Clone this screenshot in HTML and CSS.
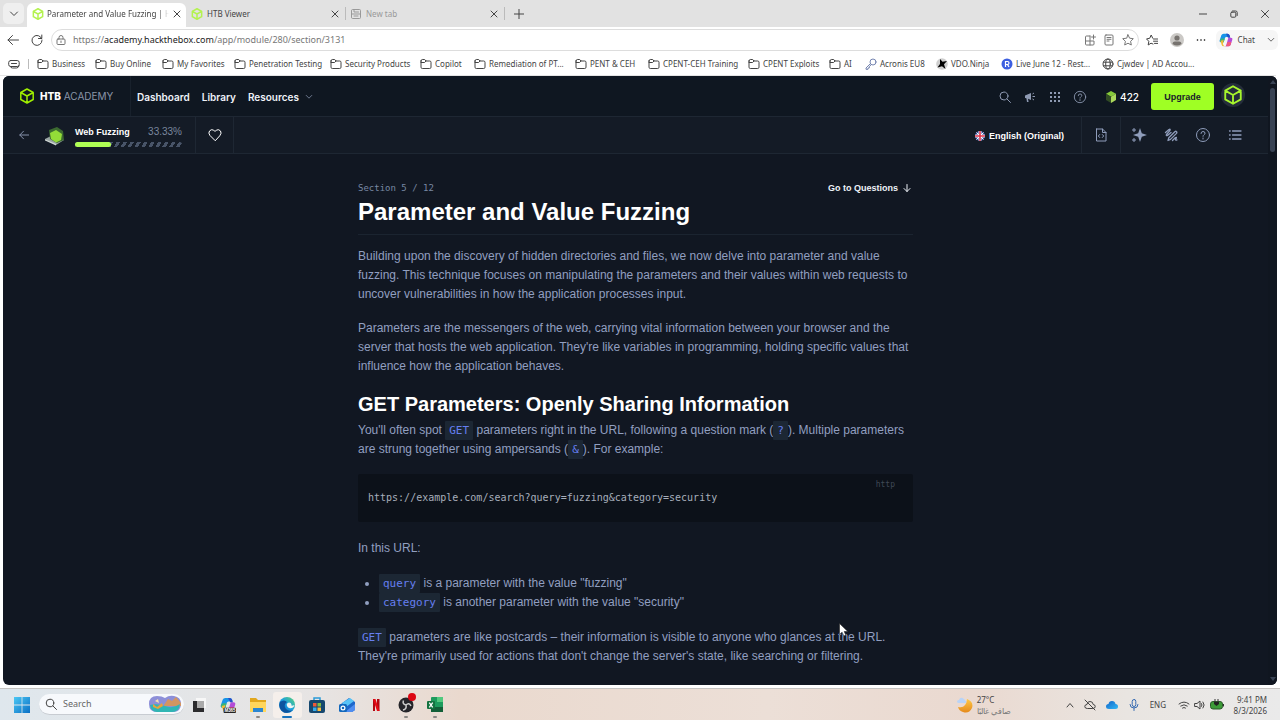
FILE: index.html
```html
<!DOCTYPE html>
<html lang="en">
<head>
<meta charset="utf-8">
<title>Parameter and Value Fuzzing | Hack The Box Academy</title>
<link rel="stylesheet" href="styles.css">
</head>
<body>
<svg class="defs" aria-hidden="true">
  <defs>
    <linearGradient id="g-edge" x1="0" y1="1" x2="1" y2="0"><stop offset="0" stop-color="#0c59a4"/><stop offset=".5" stop-color="#1b9de2"/><stop offset="1" stop-color="#5bd66f"/></linearGradient>
    <linearGradient id="g-win" x1="0" y1="0" x2="1" y2="1"><stop offset="0" stop-color="#4cc8f4"/><stop offset="1" stop-color="#0a6fc4"/></linearGradient>
    <linearGradient id="g-cloud" x1="0" y1="0" x2="1" y2="1"><stop offset="0" stop-color="#1264c8"/><stop offset="1" stop-color="#32b8f5"/></linearGradient>
    <linearGradient id="g-moon" x1="0" y1="0" x2="0" y2="1"><stop offset="0" stop-color="#ffc845"/><stop offset="1" stop-color="#e58a1c"/></linearGradient>
    <symbol id="i-folder" viewBox="0 0 12 12"><path d="M1 3v6.2q0 1.3 1.3 1.3h7.4q1.3 0 1.3-1.3V4.3Q11 3 9.700 3H6L4.700 1.500H2.300Q1 1.500 1 3zM1 4.500h3.600L6 3"/></symbol>
    <symbol id="i-cube" viewBox="0 0 16 16"><path d="M8 1l6.200 3.500v7L8 15l-6.200-3.500v-7zM1.800 4.500L8 8l6.200-3.500M8 8v7"/></symbol>
    <symbol id="i-close" viewBox="0 0 8 8"><path d="M1 1l6 6M7 1L1 7"/></symbol>
    <symbol id="i-help" viewBox="0 0 16 16"><circle cx="8" cy="8" r="6.500"/><path d="M6 6.500q0-2 2-2t2 1.700q0 1-1 1.600-1 .6-1 1.500M8 11v1"/></symbol>
    <symbol id="i-down" viewBox="0 0 10 10"><path d="M1.500 3L5 6.500 8.500 3"/></symbol>
    <symbol id="i-copilot" viewBox="0 0 18 18"><path fill="#1794e8" d="M6 1h5q2 0 2.600 2l.6 2H9.500q-1.500 0-2 1.700L6 12H3Q0 12 1 9l2-6q.7-2 3-2z"/><path fill="#39b57a" d="M3 12h3l1.500-5H3L1.200 9Q.5 12 3 12z"/><path fill="#f2ba37" d="M2 10l4-1-1 5q1 3 3 3H6q-2 0-2.600-2L2.500 12z"/><path fill="#b44bd8" d="M12 6h3q3 0 2 3l-2 6q-.7 2-3 2H7q2 0 2.500-2z"/><path fill="#f0577c" d="M8 17q1.200 0 1.800-2l1-3.500h5L15 15q-.7 2-3 2z"/><path fill="#2750c8" d="M9 1h2q2 0 2.600 2l.9 3h-3z"/></symbol>
  </defs>
</svg>

<header class="browser">
  <div class="tabstrip">
    <button class="tab-menu" aria-label="Tab actions"><svg class="ic s10"><use href="#i-down"/></svg></button>
    <div class="tab tab-active"><svg class="ic s12 lime"><use href="#i-cube"/></svg><span class="tab-title fade">Parameter and Value Fuzzing | Hac</span><button class="tab-x" aria-label="Close tab"><svg class="ic s8"><use href="#i-close"/></svg></button></div>
    <div class="tab"><svg class="ic s12 lime"><use href="#i-cube"/></svg><span class="tab-title">HTB Viewer</span><button class="tab-x" aria-label="Close tab"><svg class="ic s8"><use href="#i-close"/></svg></button></div>
    <div class="tab tab-new"><svg class="ic s12" viewBox="0 0 12 12"><path d="M1.500 2.500q0-1 1-1h7q1 0 1 1v7q0 1-1 1h-7q-1 0-1-1zM1.500 6h9M4 1.500V4h4.500M4 8h4"/></svg><span class="tab-title">New tab</span><button class="tab-x" aria-label="Close tab"><svg class="ic s8"><use href="#i-close"/></svg></button></div>
    <button class="tab-add" aria-label="New tab"><svg class="ic s10" viewBox="0 0 10 10"><path d="M5 0v10M0 5h10"/></svg></button>
    <div class="window-buttons">
      <button aria-label="Minimize"><svg class="ic s8" viewBox="0 0 8 8"><path d="M0 4h8"/></svg></button>
      <button aria-label="Restore"><svg class="ic s8" viewBox="0 0 8 8"><rect x=".8" y="2.200" width="5" height="5" rx="1"/><path d="M2.500 1h3.200Q7.200 1 7.200 2.500v3"/></svg></button>
      <button aria-label="Close"><svg class="ic s8" viewBox="0 0 8 8"><path d="M.5.5l7 7M7.500.5l-7 7"/></svg></button>
    </div>
  </div>

  <div class="toolbar">
    <button aria-label="Back"><svg class="ic s12" viewBox="0 0 12 12"><path d="M11.500 6H1M5.500 1.500L1 6l4.500 4.500"/></svg></button>
    <button aria-label="Refresh"><svg class="ic s12" viewBox="0 0 12 12"><path d="M10.800 5A5 5 0 1 0 11 6.500M10.800 1v3.500H7.500"/></svg></button>
    <div class="address">
      <svg class="ic s10" viewBox="0 0 10 10"><rect x="1" y="4" width="8" height="5.500" rx="1"/><path d="M3 4V2.500a2 2 0 0 1 4 0V4M5 6v1.500"/></svg>
      <a class="url" href="#">https://<b>academy.hackthebox.com</b>/app/module/280/section/3131</a>
      <svg class="ic s12" viewBox="0 0 12 12"><path d="M6 2H2.500Q1.500 2 1.500 3v7q0 1 1 1H9q1 0 1-1V7H1.500M6 2v9M9.500 1v4M7.500 3h4"/></svg>
      <svg class="ic s12" viewBox="0 0 12 12"><rect x="2" y="1" width="8" height="10" rx="1"/><path d="M4 3.500h4M4 5.300h4M4 7h2"/></svg>
      <svg class="ic s12" viewBox="0 0 12 12"><path d="M6 .8l1.600 3.400 3.700.5-2.700 2.600.7 3.700L6 9.200 2.700 11l.7-3.700L.7 4.700l3.700-.5z"/></svg>
    </div>
    <button aria-label="Favorites"><svg class="ic s12" viewBox="0 0 12 12"><path d="M7 10L5 9.200 2.200 11l.6-3.700L.5 4.900l3.200-.6L5.200 1l1.500 3.200M7.500 5H12M7.500 7.200H12M8.500 9.400H12"/></svg></button>
    <button class="profile" aria-label="Profile"><svg class="s14" viewBox="0 0 14 14"><circle cx="7" cy="7" r="7" fill="#cbc9c6"/><circle cx="7" cy="5" r="2.600" fill="#77736f"/><path d="M2.500 11Q2.500 8.500 5 8.500h4q2.500 0 2.500 2.500Q7 14 2.500 11z" fill="#77736f"/></svg></button>
    <button aria-label="Settings and more"><svg class="s10" viewBox="0 0 10 10"><circle cx="1.500" cy="5" r=".8"/><circle cx="5" cy="5" r=".8"/><circle cx="8.500" cy="5" r=".8"/></svg></button>
    <button class="chat"><svg class="s14"><use href="#i-copilot"/></svg><span>Chat</span><svg class="ic s8"><use href="#i-down"/></svg></button>
  </div>

  <nav class="bookmarks" aria-label="Favorites bar">
    <a href="#" aria-label="Workspace"><svg class="ic s12" viewBox="0 0 12 12"><rect x=".7" y="2.500" width="10.500" height="6" rx="2"/><path d="M3.500 5.500h5M2.500 8.500q0 1.500 2 1.500h4q1.800 0 2.500-2"/></svg></a>
    <a href="#"><svg class="ic s12"><use href="#i-folder"/></svg>Business</a>
    <a href="#"><svg class="ic s12"><use href="#i-folder"/></svg>Buy Online</a>
    <a href="#"><svg class="ic s12"><use href="#i-folder"/></svg>My Favorites</a>
    <a href="#"><svg class="ic s12"><use href="#i-folder"/></svg>Penetration Testing</a>
    <a href="#"><svg class="ic s12"><use href="#i-folder"/></svg>Security Products</a>
    <a href="#"><svg class="ic s12"><use href="#i-folder"/></svg>Copilot</a>
    <a href="#"><svg class="ic s12"><use href="#i-folder"/></svg>Remediation of PT...</a>
    <a href="#"><svg class="ic s12"><use href="#i-folder"/></svg>PENT &amp; CEH</a>
    <a href="#"><svg class="ic s12"><use href="#i-folder"/></svg>CPENT-CEH Training</a>
    <a href="#"><svg class="ic s12"><use href="#i-folder"/></svg>CPENT Exploits</a>
    <a href="#"><svg class="ic s12"><use href="#i-folder"/></svg>AI</a>
    <a href="#"><svg class="ic s12 key" viewBox="0 0 12 12"><circle cx="8" cy="4" r="3"/><path d="M5.500 5.500L1 10v1.300h2V10h1.300V8.500L6.500 6.500"/></svg>Acronis EU8</a>
    <a href="#"><svg class="s12" viewBox="0 0 12 12"><circle cx="6" cy="6" r="5.800" fill="#cfcfcf"/><path d="M4 1l2.500 2.700L11 3 8 6.200 9.500 11 6 8.200 1.500 9.500 4 6z"/></svg>VDO.Ninja</a>
    <a href="#"><svg class="s12" viewBox="0 0 12 12"><circle cx="6" cy="6" r="5.500" fill="#3d5fe0"/><path d="M4.500 9V3.500h2q1.500 0 1.500 1.500T6.500 6.500h-2M6.500 6.500L8 9" fill="none" stroke="#fff" stroke-width="1.200"/></svg>Live June 12 - Rest...</a>
    <a href="#"><svg class="ic s12" viewBox="0 0 12 12"><circle cx="6" cy="6" r="5"/><ellipse cx="6" cy="6" rx="2.300" ry="5"/><path d="M1.500 4.200h9M1.500 7.800h9"/></svg>Cjwdev | AD Accou...</a>
  </nav>
</header>

<div class="viewport">
  <div class="page">
    <header class="site-header">
      <a class="brand" href="#"><svg class="ic s16 logo-cube"><use href="#i-cube"/></svg><span><b>HTB</b> ACADEMY</span></a>
      <nav class="site-nav">
        <a href="#">Dashboard</a><a href="#">Library</a><a href="#">Resources<svg class="ic s8"><use href="#i-down"/></svg></a>
      </nav>
      <div class="header-tools">
        <button aria-label="Search"><svg class="ic s12" viewBox="0 0 12 12"><circle cx="5" cy="5" r="4"/><path d="M8 8l3.500 3.500"/></svg></button>
        <button aria-label="Announcements"><svg class="s12" viewBox="0 0 12 12"><path fill="currentColor" d="M1 4.500L7 2v7L4 7.800 4.600 11H3L2.400 7.200 1 7z"/><path stroke="currentColor" d="M8.500 5.500H11M8.500 3l1.500-1M8.500 8l1.500 1"/></svg></button>
        <button aria-label="Apps"><svg class="s12" viewBox="0 0 12 12"><path stroke="currentColor" stroke-width="2" stroke-dasharray="2 2" d="M1 2h10M1 6h10M1 10h10"/></svg></button>
        <button aria-label="Help"><svg class="ic s14"><use href="#i-help"/></svg></button>
      </div>
      <span class="cubes"><svg class="s12" viewBox="0 0 12 12"><path fill="#86c93a" d="M6 0l5 2.800L6 5.800 1 2.800z"/><path fill="#314c24" d="M1 2.800l5 3V12L1 9z"/><path fill="#abd85c" d="M11 2.800l-5 3V12l5-3z"/></svg>422</span>
      <button class="upgrade">Upgrade</button>
      <button class="avatar" aria-label="Account"><svg class="ic s20"><use href="#i-cube"/></svg></button>
    </header>

    <div class="module-bar">
      <a class="back" href="#" aria-label="Back to module"><svg class="ic s10" viewBox="0 0 10 10"><path d="M10 5H.8M4.500 1.200L.8 5l3.700 3.800"/></svg></a>
      <div class="module">
        <svg class="s20" viewBox="0 0 20 20"><path fill="#9aa6a3" d="M0 13l8-4 11 5-8 5z"/><path fill="#d0d8d5" d="M0 13l11 5v1.500L0 14.500z"/><path fill="#3c6a30" d="M4 4l8-3 6 4 1 9-7 3-7-4z"/><path fill="#93dc38" d="M5 7l6-3 6 4-1 6-5 2.500L6 13z"/></svg>
        <div class="module-progress">
          <div class="module-label"><b>Web Fuzzing</b><span>33.33%</span></div>
          <div class="track" role="progressbar" aria-label="Web Fuzzing" aria-valuenow="33"><div class="bar" style="width:33.33%"></div></div>
        </div>
      </div>
      <button class="like" aria-label="Favorite"><svg class="ic s14" viewBox="0 0 14 14"><path d="M7 12.500L2 7.500Q0 5 1.500 3T5.500 2L7 3.500 8.500 2q2.500-1 4 1T12 7.500z"/></svg></button>
      <button class="language"><svg class="s10" viewBox="0 0 10 10"><defs><clipPath id="flag-clip"><circle cx="5" cy="5" r="5"/></clipPath></defs><g clip-path="url(#flag-clip)"><path d="M0 0h10v10H0z" fill="#334b99"/><path d="M0 0l10 10M10 0L0 10" stroke="#fff"/><path d="M5 0v10M0 5h10" stroke="#fff" stroke-width="3"/><path d="M5 0v10M0 5h10" stroke="#de344b" stroke-width="1.600"/></g></svg>English (Original)</button>
      <button class="source" aria-label="Source"><svg class="ic s14" viewBox="0 0 14 14"><path d="M3 1h5.500L12 4.500V13H2.500V1zM8.500 1v3.500H12M5.700 6.500L4.300 8l1.400 1.500M8.300 6.500L9.700 8 8.300 9.500"/></svg></button>
      <div class="section-tools">
        <button aria-label="Assistant"><svg class="s16" viewBox="0 0 16 16"><path fill="currentColor" d="M9 1l1.800 5.200L16 8l-5.200 1.800L9 15l-1.800-5.200L2 8l5.200-1.800z"/><path stroke="currentColor" d="M3 1v4M1 3h4M3 11v4M1 13h4"/></svg></button>
        <button aria-label="Notes"><svg class="ic s14" viewBox="0 0 14 14"><path stroke-width="1.300" d="M4 12.500l.8-2.800 6-6q1-.8 1.700 0t0 1.700l-6 6zM1.500 4.500L5 1.500q1.500-.8 1 .8L2.500 6.500q-.6 1.600 1 1L7 4.500M8.500 12.500l3-3q1.200-.6.8.6l-.8 1.400q0 1 1.500.5"/></svg></button>
        <button aria-label="Help"><svg class="ic s16"><use href="#i-help"/></svg></button>
        <button aria-label="Contents"><svg class="ic s14" viewBox="0 0 14 14"><path d="M4.500 3H13M4.500 7H13M4.500 11H13M1.500 3h.7M1.500 7h.7M1.500 11h.7" stroke-width="1.300"/></svg></button>
      </div>
    </div>

    <main class="article">
      <div class="article-top"><span class="section-no">Section 5 / 12</span><a class="go" href="#questions">Go to Questions<svg class="ic s8" viewBox="0 0 8 8"><path d="M4 .5v7M1 4.500l3 3 3-3"/></svg></a></div>
      <h1>Parameter and Value Fuzzing</h1>
      <p>Building upon the discovery of hidden directories and files, we now delve into parameter and value fuzzing. This technique focuses on manipulating the parameters and their values within web requests to uncover vulnerabilities in how the application processes input.</p>
      <p>Parameters are the messengers of the web, carrying vital information between your browser and the server that hosts the web application. They're like variables in programming, holding specific values that influence how the application behaves.</p>
      <h2>GET Parameters: Openly Sharing Information</h2>
      <p>You'll often spot <code>GET</code> parameters right in the URL, following a question mark (<code>?</code>). Multiple parameters are strung together using ampersands (<code>&amp;</code>). For example:</p>
      <div class="snippet"><span class="lang">http</span><pre>https://example.com/search?query=fuzzing&amp;category=security</pre></div>
      <p>In this URL:</p>
      <ul>
        <li><code>query</code> is a parameter with the value "fuzzing"</li>
        <li><code>category</code> is another parameter with the value "security"</li>
      </ul>
      <p><code>GET</code> parameters are like postcards – their information is visible to anyone who glances at the URL. They're primarily used for actions that don't change the server's state, like searching or filtering.</p>
    </main>
  </div>
  <div class="scrollbar" aria-hidden="true"><i class="arrow-up"></i><div class="thumb"></div><i class="arrow-down"></i></div>
</div>

<footer class="taskbar">
  <button class="start" aria-label="Start"><svg class="s16" viewBox="0 0 16 16"><path fill="url(#g-win)" d="M0 0h7.600v7.600H0zM8.400 0H16v7.600H8.400zM0 8.400h7.600V16H0zM8.400 8.400H16V16H8.400z"/></svg></button>
  <label class="search"><svg class="ic s12" viewBox="0 0 12 12"><circle cx="5" cy="5" r="3.800"/><path d="M8 8l3.500 3.500"/></svg><input type="text" placeholder="Search" aria-label="Search">
    <svg class="scene" viewBox="0 0 34 18"><path fill="#8d8fd8" d="M1 9Q1 1 9 1q5 0 8 2 4-3 9-2 7 1 7 8t-7 8H9Q1 17 1 9z"/><path fill="#d39562" d="M16 10l4-6 4 2 4-4 5 6v3H16z"/><path fill="#30b6b4" d="M2 10q7-2 15 1t15-2q-1 8-8 8H9q-6 0-7-7z"/><path fill="#e8a33c" d="M5 9l4 3 5-4 1 3-5 3-5-2z"/><path fill="#f7dfae" d="M7 6l3-2 1 4z"/></svg></label>
  <div class="apps">
    <button aria-label="Task view"><svg class="s16" viewBox="0 0 16 16"><path fill="#f7f7f7" d="M5 1h10v10H5z"/><path fill="#2b2b2d" d="M2 4h4v7h7v4H2z"/><path fill="#aaa" d="M6 4h7v7H6z"/></svg></button>
    <button aria-label="Microsoft 365 Copilot"><svg class="s16" viewBox="0 0 18 18"><use href="#i-copilot"/><rect x="4" y="12" width="14" height="6" rx="1" fill="#222"/><text x="5" y="17" class="badge-text">M365</text></svg></button>
    <button class="open" aria-label="File Explorer"><svg class="s16" viewBox="0 0 16 16"><path fill="#e2a71d" d="M0 1h6l2 2h8v12H0z"/><path fill="#ffd65c" d="M0 5h16v10H0z"/><path fill="#2b86d1" d="M3 11h10v4H3z"/></svg></button>
    <button class="current" aria-label="Microsoft Edge"><svg class="s16" viewBox="0 0 16 16"><circle cx="8" cy="8" r="8" fill="url(#g-edge)"/><path fill="#0d549f" d="M1 5Q5 2 8 5 4 8 7 12q3 3 7 1-4 4-9 2.400Q-1 12 1 5z"/><path fill="#eef4f3" d="M8 9q-1-3 2-3.500 2 0 2.500 2-1 2 3 .5-1 3.500-4.500 3.300Q8.500 11 8 9z"/></svg></button>
    <button aria-label="Microsoft Store"><svg class="s16" viewBox="0 0 16 16"><path fill="none" stroke="#2b9bd8" stroke-width="1.500" d="M5 4V1h6v3"/><rect y="3" width="16" height="13" rx="2" fill="#16486f"/><path fill="#f05a38" d="M4 6h3.500v3.500H4z"/><path fill="#83bd42" d="M8.500 6H12v3.500H8.500z"/><path fill="#35acec" d="M4 10.500h3.500V14H4z"/><path fill="#fbbc3b" d="M8.500 10.500H12V14H8.500z"/></svg></button>
    <button aria-label="Outlook"><svg class="s16" viewBox="0 0 16 16"><path fill="#1d67ca" d="M2 7l8-6 6 4v8l-3 2H4z"/><path fill="#58c3f7" d="M3 6l8-5 4 3-8 6z"/><path fill="#4f8df0" d="M6 15l10-8v6l-3 2z"/><rect y="7" width="8" height="8" rx="1.500" fill="#1268bd"/><circle cx="4" cy="11" r="1.900" fill="none" stroke="#fff" stroke-width="1.200"/></svg></button>
    <button aria-label="Netflix"><svg class="s16" viewBox="0 0 16 16"><path fill="#b20710" d="M5 2h2v12H5zM9 2h2.500v12H9z"/><path fill="#e50914" d="M5 2h2.500L11.500 14H9z"/></svg></button>
    <button class="open" aria-label="OBS Studio"><svg class="s16" viewBox="0 0 16 16"><circle cx="8" cy="8" r="7.500" fill="#25252a"/><path d="M8 8Q4 7 5.500 3.500M8 8q3-3 5 1M8 8q1 4-3 5" fill="none" stroke="#ccc" stroke-width="1.500"/></svg><i class="rec"></i></button>
    <button class="open" aria-label="Excel"><svg class="s16" viewBox="0 0 16 16"><rect x="4" y="0" width="12" height="15" rx="1" fill="#1e9b5d"/><path fill="#51c97e" d="M10 0h6v5h-6z"/><path fill="#135f38" d="M4 10h12v5H4z"/><rect y="4" width="8" height="8" rx="1" fill="#13723f"/><path d="M2.300 5.700l3.400 4.600M5.700 5.700l-3.400 4.600" stroke="#fff" stroke-width="1.300"/></svg></button>
  </div>
  <div class="weather"><svg class="s16" viewBox="0 0 16 16"><path fill="url(#g-moon)" d="M10 2q7 3 5 9-3 6-9 4-4-1-5-5 8 2 9-8z"/><path fill="#b8d3f7" d="M2 6Q0 6 0 4.500T2 3q1-3 3.500-2T8 3.500Q10 4 9 6z"/></svg><div><span>27°C</span><span class="dim" lang="ar" dir="rtl">صافي غالبًا</span></div></div>
  <div class="tray">
    <svg class="ic s8 up" viewBox="0 0 8 8"><path d="M1 6l3-3.500L7 6"/></svg>
    <svg class="ic s12" viewBox="0 0 12 12"><path d="M3 9.500Q.8 9.500.8 7.500T3 5.500Q3 2.500 6 2.500t3.200 3q2 0 2 2t-2 2zM1 1l10 10"/></svg>
    <svg class="s12" viewBox="0 0 12 12"><path fill="url(#g-cloud)" d="M3 10Q0 10 0 7.500T2.500 5Q3 2 6 2t3.500 3Q12 5 12 7.500T9.500 10z"/></svg>
    <svg class="ic s12 mic" viewBox="0 0 12 12"><rect x="4.200" y=".5" width="3.600" height="7" rx="1.800"/><path d="M2 5.500Q2 9 6 9t4-3.500M6 9v2.500"/></svg>
    <span>ENG</span>
    <div class="status">
      <svg class="ic s12" viewBox="0 0 12 12"><path d="M1 5q5-4 10 0M2.700 7q3.300-2.600 6.600 0M4.500 9q1.500-1.200 3 0"/></svg>
      <svg class="ic s12" viewBox="0 0 12 12"><path d="M1 4.500h2L6 2v8L3 7.500H1zM7.500 4.500q1.200 1.500 0 3M9 3q2.500 3 0 6"/></svg>
      <svg class="s14" viewBox="0 0 14 14"><rect x=".5" y="3.500" width="12" height="7.500" rx="2.500" fill="#3c9b38" stroke="#2b5b2a"/><path d="M13.500 6v2.500M5 1v3M8 1v3" stroke="#333"/><path fill="#222" d="M4 4h5v2L6.500 8 4 6z"/></svg>
    </div>
  </div>
  <div class="clock"><time>9:41 PM</time><time>8/3/2026</time></div>
</footer>
<svg class="cursor" viewBox="0 0 10 14"><path fill="#fff" stroke="#222" stroke-width=".6" d="M.5.5v11l2.600-2.300L4.800 13l2-.9L5.200 8.500h3.600z"/></svg>
</body>
</html>
```
FILE: styles.css
```css
* { box-sizing: border-box; }
body {
  margin: 0;
  height: 100vh;
  display: flex;
  flex-direction: column;
  overflow: hidden;
  background: #fff;
  color: #444;
  font: 9px/12px "Noto Sans", "Open Sans", sans-serif;
}
button { border: 0; padding: 0; background: none; color: inherit; font: inherit; display: flex; align-items: center; justify-content: center; }
a { color: inherit; text-decoration: none; }
svg { flex: none; display: block; }
.defs { position: absolute; width: 0; height: 0; }
.ic { fill: none; stroke: currentColor; stroke-width: 1; stroke-linecap: round; stroke-linejoin: round; }
.s8 { width: 8px; height: 8px; }
.s10 { width: 10px; height: 10px; }
.s12 { width: 12px; height: 12px; }
.s14 { width: 14px; height: 14px; }
.s16 { width: 16px; height: 16px; }
.s20 { width: 20px; height: 20px; }
.lime { color: #b4f24f; stroke-width: 2; }

/* Browser chrome */
.tabstrip { display: flex; height: 27px; padding-left: 3px; background: #e2e2e2; }
.tab-menu { width: 21px; height: 21px; margin: 3px 3px 0 0; border-radius: 5px; background: #efefef; }
.tab { display: flex; align-items: center; gap: 4px; width: 159px; padding: 0 4px 0 5px; font-size: 8px; }
.tab-active { gap: 3px; margin-top: 3px; padding-bottom: 3px; border-radius: 6px 6px 0 0; background: #fff; }
.tab-title { flex: 1; white-space: nowrap; overflow: hidden; }
.fade { mask-image: linear-gradient(90deg, #000 92%, transparent); }
.tab-x { width: 12px; height: 12px; }
.tab-active .tab-x { width: 10px; }
.tab-new { background: linear-gradient(#bbb, #bbb) 0 50% / 1px 13px no-repeat; }
.tab-new .tab-title, .tab-new > .ic { color: #999; }
.tab-add { width: 30px; background: linear-gradient(#bbb, #bbb) 0 50% / 1px 13px no-repeat; }
.window-buttons { display: flex; margin-left: auto; }
.window-buttons button { width: 31px; }
.toolbar { display: flex; align-items: center; gap: 12px; height: 26px; padding: 0 2px 0 7px; }
.address { flex: 1; display: flex; align-items: center; gap: 7px; height: 22px; padding: 0 4px; border: 1px solid #ddd; border-radius: 11px; color: #777; }
.address .url { flex: 1; }
.address b { font-weight: 400; color: #222; }
.toolbar > .address { margin: 0 -5px 0 -4px; }
.chat { gap: 5px; height: 20px; margin-left: -2px; padding: 0 3px; border-radius: 6px; background: #f6f6f6; font-size: 8px; }
.chat .ic { margin-left: 7px; }
.bookmarks { display: grid; grid-template-columns: 29px 58px 67px 72px 96px 90px 54px 101px 73px 100px 81px 36px 71px 65px 101px 1fr; height: 23px; margin-right: 4px; padding-left: 8px; border-bottom: 1px solid #e4e4e4; font-size: 8px; }
.bookmarks a { display: flex; align-items: center; gap: 3px; white-space: nowrap; }
.bookmarks a:first-child { background: linear-gradient(#bbb, #bbb) 20px 50% / 1px 10px no-repeat; }
.key { color: #7484b0; }

/* Academy page */
.viewport { flex: 1; min-height: 0; display: flex; margin: 0 3px 3px; border-radius: 6px; overflow: hidden; background: #111722; color: #919fc0; font-family: "Liberation Sans", Arial, sans-serif; }
.page { flex: 1; overflow: hidden; }
.scrollbar { width: 9px; padding: 4px 2px; display: flex; flex-direction: column; gap: 4px; background: #101620; }
.thumb { height: 64px; border-radius: 3px; background: #394354; margin-bottom: auto; }
.arrow-up, .arrow-down { border: 3px solid transparent; width: 6px; }
.arrow-up { border-bottom: 4px solid #394354; border-top: 0; }
.arrow-down { border-top: 4px solid #394354; border-bottom: 0; }
.site-header { display: flex; align-items: center; height: 41px; background: #0f1721; border-bottom: 1px solid #1e2733; }
.brand { align-self: stretch; display: flex; align-items: center; gap: 5px; width: 128px; padding-left: 16px; border-right: 1px solid #18212c; color: #8a95a8; font: 10px/12px Inter, sans-serif; }
.brand b { color: #fff; font-weight: 800; }
.logo-cube { color: #9fef00; stroke-width: 1.5; }
.site-nav { display: flex; gap: 12px; padding: 2px 0 0 6px; color: #eef2f8; font: 600 10px/14px Inter, sans-serif; }
.site-nav a { display: flex; align-items: center; gap: 6px; }
.site-nav .ic { color: #8491a8; }
.header-tools { display: flex; margin-left: auto; padding-top: 2px; color: #8e9ab2; }
.header-tools button { width: 25px; height: 24px; }
.cubes { display: flex; align-items: center; gap: 3px; margin-left: 13px; padding-top: 1px; color: #fff; font: 500 10px/12px Inter, sans-serif; }
.upgrade { width: 63px; height: 27px; margin: 0 7px 0 12px; padding-top: 1px; border-radius: 3px; background: #9fff24; color: #17212b; font-weight: 700; font-size: 9px; }
.avatar { width: 24px; height: 24px; margin: 0 23px 3px 0; border-radius: 50%; background: #252e3b; color: #a6f52c; }
.avatar .ic { stroke-width: 1.5; }
.module-bar { display: flex; height: 37px; background: #141b26; border-bottom: 1px solid #1e2733; }
.back { display: flex; align-items: center; width: 42px; padding-left: 16px; color: #8592aa; }
.module { display: flex; align-items: center; gap: 10px; width: 151px; padding: 2px 13px 0 0; border-right: 1px solid #1e2733; }
.module-progress { flex: 1; }
.module-label { display: flex; justify-content: space-between; font-size: 10px; color: #7a879f; }
.module-label b { color: #fff; font-size: 9px; }
.track { height: 5px; margin-top: 4px; background: repeating-linear-gradient(120deg, #485468 0 3px, transparent 3px 6px); border-radius: 3px; }
.bar { height: 5px; border-radius: 3px; background: #b0ff54; }
.like { width: 38px; border-right: 1px solid #1e2733; color: #fff; }
.language { gap: 4px; margin-left: auto; padding: 1px 17px 0 0; color: #fff; font-weight: 700; font-size: 9px; }
.source { width: 40px; border: solid #1e2733; border-width: 0 1px; color: #8f9dbb; }
.section-tools { display: flex; padding: 0 17px 0 2px; color: #8f9dbb; }
.section-tools button { width: 32px; }

.article { max-width: 555px; margin: 0 auto; padding: 26px 0 16px; font-size: 12px; line-height: 19px; }
.article-top { display: flex; justify-content: space-between; align-items: center; line-height: 14px; }
.section-no { font-family: "DejaVu Sans Mono", monospace; font-size: 9px; color: #7888a3; }
.go { display: flex; align-items: center; gap: 5px; padding: 1px 2px 0 0; color: #eef2f8; font-size: 9px; font-weight: 700; }
h1 { margin: 0 0 12px; padding: 1px 0 6px; border-bottom: 1px solid #1b2430; color: #fff; font-size: 24px; line-height: 32px; }
h2 { margin: 0 0 4px; color: #fff; font-size: 20px; line-height: 26px; }
p { margin: 0 0 15px; }
code { padding: 3px 4px; border-radius: 1px; background: #1c2734; color: #667ff0; font: 11px/13px "DejaVu Sans Mono", monospace; }
.snippet { display: grid; margin-bottom: 17px; height: 48px; align-items: center; background: #0c1119; border-radius: 2px; }
.snippet pre, .snippet .lang { grid-area: 1 / 1; }
pre { margin: 0; padding-left: 10px; color: #a7aebb; font: 10px/14px "DejaVu Sans Mono", monospace; }
.lang { align-self: start; justify-self: end; padding: 4px 18px 0 0; color: #3f4855; font: 8px/14px "DejaVu Sans Mono", monospace; }
ul { margin: 0 0 16px; padding: 1px 0 0 21px; }

/* Taskbar */
.taskbar { display: flex; align-items: center; height: 32px; border-top: 1px solid #c5c3c1; background: linear-gradient(90deg, #dfe7ed, #e7e4e3 25%, #ead9ce 36%, #ecdfd7 60%, #ead9d0 76%, #e9e5e1 88%, #eaeaea); }
.start { width: 39px; padding-left: 4px; }
.search { display: flex; align-items: center; gap: 6px; width: 145px; height: 21px; padding: 0 2px 0 6px; border-radius: 11px; background: #f7f9fc; border-bottom: 1px solid #c8ccd2; }
.search input { flex: 1; min-width: 0; border: 0; background: none; font: inherit; padding: 0; }
.search input::placeholder { color: #666; }
.scene { width: 34px; height: 18px; }
.apps { display: grid; grid-template-columns: repeat(9, 1fr); width: 266px; }
.apps button { position: relative; height: 26px; }
.current { border-radius: 3px; background: #f5efeb; }
.open::after, .current::after { content: ""; position: absolute; bottom: 0; width: 4px; height: 2px; border-radius: 1px; background: #8b8885; }
.current::after { width: 10px; background: #1672bd; }
.badge-text { font: 700 5px "Liberation Sans", sans-serif; fill: #fff; }
.rec { position: absolute; top: 1px; right: 4px; width: 8px; height: 8px; border-radius: 50%; background: #dc0713; }
.weather { display: flex; align-items: center; gap: 4px; margin-left: auto; width: 109px; font-size: 8px; line-height: 11px; }
.weather div { display: grid; }
.dim { color: #777; }
.tray { display: flex; align-items: center; gap: 10px; font-size: 8px; }
.status { display: flex; align-items: center; gap: 4px; padding-left: 2px; }
.mic { color: #376bb2; }
.clock { display: grid; width: 43px; margin-right: 13px; text-align: right; font-size: 8px; line-height: 11px; }
.cursor { position: absolute; left: 839px; top: 623px; width: 10px; height: 14px; }
```
